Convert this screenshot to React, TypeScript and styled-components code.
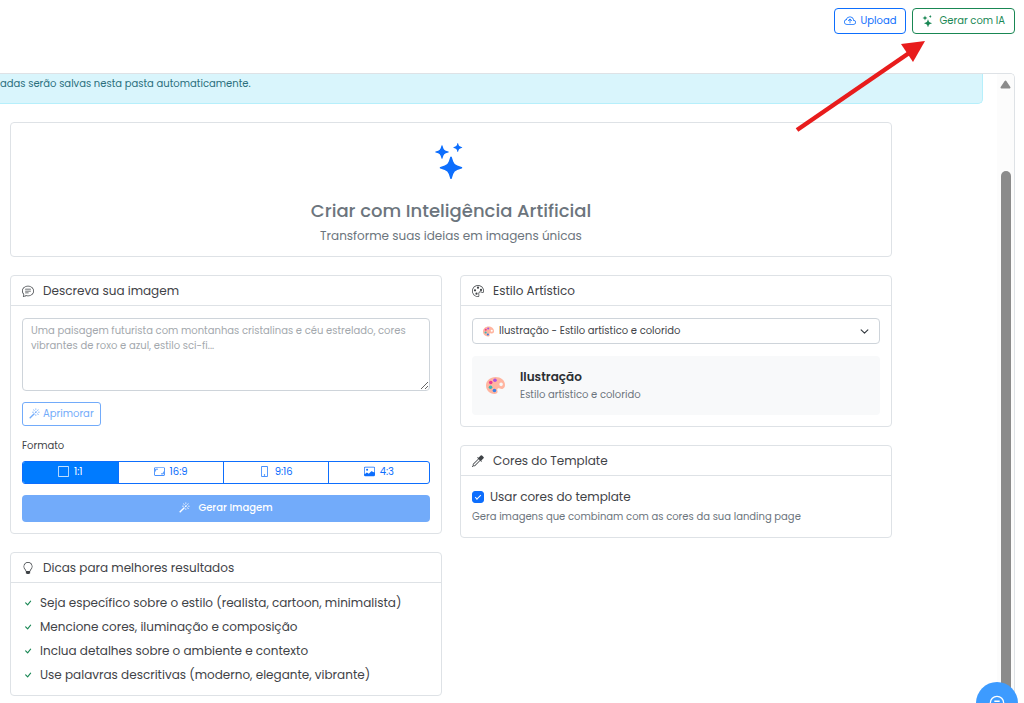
import React, { useState } from "react";
import styled, { createGlobalStyle, css } from "styled-components";
import {
  BsAspectRatio,
  BsChatText,
  BsCheck,
  BsCloudArrowUp,
  BsEyedropper,
  BsImage,
  BsLightbulb,
  BsMagic,
  BsPalette,
  BsPhone,
  BsSquare,
  BsStars,
} from "react-icons/bs";

const blue = "#0d6efd";
const green = "#198754";
const line = "#dee2e6";
const ink = "#3f4347";
const muted = "#6c757d";

const GlobalStyle = createGlobalStyle`
  *, *::before, *::after { box-sizing: border-box; }
  body {
    margin: 0;
    background: #fff;
    color: ${ink};
    font-family: Poppins, Inter, "Liberation Sans", sans-serif;
    font-size: 12px;
    line-height: 18px;
  }
  button, input, select, textarea { font: inherit; }
  h1, h2, p, ul { margin: 0; padding: 0; }
  svg { flex: none; }
`;

const Page = styled.div`
  position: relative;
  display: flex;
  flex-direction: column;
  height: 100vh;
  overflow: hidden;
`;

const Toolbar = styled.header`
  display: flex;
  justify-content: flex-end;
  gap: 6px;
  padding: 8px 9px 39px;
`;

const OutlineButton = styled.button<{ $color: string }>`
  display: flex;
  align-items: center;
  gap: 5px;
  height: 26px;
  padding: 0 9px;
  border: 1px solid ${(p) => p.$color};
  border-radius: 4px;
  background: #fff;
  color: ${(p) => p.$color};
  font-size: 10px;
  line-height: 16px;
`;

const Panel = styled.section`
  display: flex;
  flex: 1;
  min-height: 0;
  margin-right: 9px;
  border: solid ${line};
  border-width: 1px 1px 0 0;
  border-top-right-radius: 5px;
  overflow: hidden;
`;

const Content = styled.main`
  flex: 1;
  min-width: 0;
`;

const Notice = styled.p`
  height: 30px;
  margin-right: 14px;
  border: solid #b6effb;
  border-width: 0 1px 1px 0;
  border-bottom-right-radius: 5px;
  background: #d9f5fc;
  color: #2b6f7d;
  font-size: 10px;
  line-height: 20px;
  white-space: nowrap;
`;

const Creator = styled.div`
  display: grid;
  grid-template-columns: 1fr 1fr;
  align-items: start;
  gap: 18px;
  padding: 18px 105px 7px 10px;
`;

const Column = styled.div`
  display: grid;
  gap: 18px;
  min-width: 0;
`;

const Card = styled.section`
  border: 1px solid ${line};
  border-radius: 4px;
  background: #fff;
`;

const Hero = styled(Card)`
  grid-column: 1 / -1;
  display: flex;
  flex-direction: column;
  align-items: center;
  height: 135px;
  padding-top: 20px;
  color: ${muted};
`;

const HeroTitle = styled.h1`
  margin-top: 21px;
  font-size: 18px;
  font-weight: 500;
  line-height: 22px;
`;

const HeroText = styled.p`
  margin-top: 5px;
`;

const CardHeader = styled.header`
  display: flex;
  align-items: center;
  gap: 9px;
  height: 30px;
  padding: 0 11px;
  border-bottom: 1px solid ${line};
`;

const CardTitle = styled.h2`
  font-size: 12px;
  font-weight: 400;
`;

const CardBody = styled.div<{ $gap?: number }>`
  display: flex;
  flex-direction: column;
  align-items: stretch;
  gap: ${(p) => p.$gap ?? 0}px;
  padding: 12px 11px 11px;
`;

const Prompt = styled.textarea`
  display: block;
  height: 73px;
  padding: 4px 8px;
  border: 1px solid #ced4da;
  border-radius: 4px;
  color: ${ink};
  font-size: 10px;
  line-height: 15px;
  resize: vertical;
  &::placeholder { color: #a3a8ad; }
`;

const EnhanceButton = styled.button`
  display: flex;
  align-items: center;
  align-self: flex-start;
  gap: 3px;
  height: 24px;
  margin-top: 11px;
  padding: 0 6px 1px;
  border: 1px solid #72abfa;
  border-radius: 3px;
  background: #fff;
  color: #72abfa;
  font-size: 10px;
  line-height: 16px;
`;

const Formats = styled.fieldset`
  margin: 11px 0 0;
  padding: 0;
  border: 0;
  min-width: 0;
  legend { padding: 0; font-size: 10px; }
`;

const FormatGroup = styled.div`
  display: flex;
  margin-top: 6px;
  height: 23px;
  border: 1px solid ${blue};
  border-radius: 3px;
  overflow: hidden;
`;

const FormatOption = styled.label<{ $active: boolean }>`
  position: relative;
  display: flex;
  flex: 1 1 auto;
  align-items: center;
  justify-content: center;
  gap: 5px;
  padding-bottom: 2px;
  color: ${blue};
  font-size: 10px;
  & + & { border-left: 1px solid ${blue}; }
  input { position: absolute; opacity: 0; margin: 0; }
  ${(p) => p.$active && css`background: #007bff; color: #fff;`}
`;

const GenerateButton = styled.button`
  display: flex;
  align-items: center;
  justify-content: center;
  gap: 8px;
  height: 27px;
  margin-top: 11px;
  padding: 0 0 2px;
  border: 0;
  border-radius: 4px;
  background: #72abfa;
  color: #fff;
  font-size: 10px;
  font-weight: 500;
`;

const Tips = styled.ul`
  padding: 8px 11px;
  list-style: none;
`;

const Tip = styled.li`
  display: flex;
  align-items: center;
  gap: 6px;
  height: 24px;
  svg { color: ${green}; }
`;

const SelectWrap = styled.div`
  position: relative;
  display: flex;
`;

const Select = styled.select`
  appearance: none;
  width: 100%;
  height: 26px;
  padding: 0 26px;
  border: 1px solid #ced4da;
  border-radius: 4px;
  background: #fff;
  color: ${ink};
  font-size: 10px;
`;

const SelectMark = styled.span<{ $end?: boolean }>`
  position: absolute;
  top: 0;
  bottom: 0;
  ${(p) => (p.$end ? "right: 11px;" : "left: 11px;")}
  display: flex;
  align-items: center;
  pointer-events: none;
`;

const StylePreview = styled.div`
  display: flex;
  align-items: center;
  gap: 15px;
  height: 59px;
  margin-top: 12px;
  padding: 0 14px;
  border-radius: 4px;
  background: #f8f9fa;
  strong { display: block; color: #2b2f33; font-weight: 600; }
`;

const Small = styled.p`
  color: ${muted};
  font-size: 10px;
`;

const CheckLabel = styled.label`
  display: flex;
  align-items: center;
  gap: 6px;
`;

const Checkbox = styled.input`
  appearance: none;
  display: grid;
  place-items: center;
  width: 12px;
  height: 12px;
  margin: 0;
  border: 1px solid ${blue};
  border-radius: 3px;
  &:checked { background: ${blue}; }
  &:checked::after {
    content: "";
    width: 6px;
    height: 3px;
    margin-bottom: 2px;
    border: solid #fff;
    border-width: 0 0 1px 1px;
    transform: rotate(-45deg);
  }
`;

const ScrollTrack = styled.div`
  display: flex;
  flex-direction: column;
  align-items: center;
  gap: 82px;
  width: 17px;
  padding-top: 6px;
  background: #fcfcfc;
`;

const ScrollThumb = styled.div`
  flex: 1;
  width: 10px;
  border-radius: 5px 5px 0 0;
  background: #8b8b8b;
`;

const HelpButton = styled.button`
  position: fixed;
  right: 6px;
  bottom: -21px;
  display: grid;
  place-items: center;
  width: 42px;
  height: 42px;
  padding: 0;
  border: 0;
  border-radius: 50%;
  background: #3d9bff;
  color: #fff;
`;

const Pointer = styled.svg`
  position: absolute;
  top: 38px;
  right: 94px;
  pointer-events: none;
`;

function Palette({ size }: { size: number }) {
  return (
    <svg width={size} height={size} viewBox="0 0 18 18" aria-hidden="true">
      <path
        d="M9 1C4 1 0 4.500 0 9c0 4.500 3.500 8 8 8 2 0 3-.8 3-2s-1-2 0-3 3 .8 5 0c1.400-.5 2-2 2-3.500C18 4 14 1 9 1Zm5.300 5.200a1.700 1.700 0 1 1 0 3.400 1.700 1.700 0 0 1 0-3.400Z"
        fill="#ffb5a0"
        fillRule="evenodd"
      />
      <circle cx="8.500" cy="4" r="1.700" fill="#a855e0" />
      <circle cx="4.500" cy="6.200" r="1.700" fill="#ec3b8d" />
      <circle cx="4.300" cy="10.700" r="1.700" fill="#3fb5b5" />
      <circle cx="8" cy="13.800" r="1.700" fill="#3b82e6" />
    </svg>
  );
}

const formats = [
  { ratio: "1:1", icon: <BsSquare size={11} /> },
  { ratio: "16:9", icon: <BsAspectRatio size={11} /> },
  { ratio: "9:16", icon: <BsPhone size={11} /> },
  { ratio: "4:3", icon: <BsImage size={11} /> },
];

const tips = [
  "Seja específico sobre o estilo (realista, cartoon, minimalista)",
  "Mencione cores, iluminação e composição",
  "Inclua detalhes sobre o ambiente e contexto",
  "Use palavras descritivas (moderno, elegante, vibrante)",
];

export default function App() {
  const [format, setFormat] = useState("1:1");
  const [useColors, setUseColors] = useState(true);

  return (
    <Page>
      <GlobalStyle />
      <Toolbar>
        <OutlineButton type="button" $color={blue}>
          <BsCloudArrowUp size={12} />
          Upload
        </OutlineButton>
        <OutlineButton type="button" $color={green}>
          <BsStars size={12} />
          Gerar com IA
        </OutlineButton>
      </Toolbar>

      <Panel>
        <Content>
          <Notice>adas serão salvas nesta pasta automaticamente.</Notice>
          <Creator>
            <Hero>
              <BsStars size={36} color={blue} />
              <HeroTitle>Criar com Inteligência Artificial</HeroTitle>
              <HeroText>Transforme suas ideias em imagens únicas</HeroText>
            </Hero>

            <Column>
              <Card>
                <CardHeader>
                  <BsChatText size={12} />
                  <CardTitle id="prompt-title">Descreva sua imagem</CardTitle>
                </CardHeader>
                <CardBody>
                  <Prompt
                    aria-labelledby="prompt-title"
                    placeholder="Uma paisagem futurista com montanhas cristalinas e céu estrelado, cores vibrantes de roxo e azul, estilo sci-fi..."
                  />
                  <EnhanceButton type="button" disabled>
                    <BsMagic size={11} />
                    Aprimorar
                  </EnhanceButton>
                  <Formats>
                    <legend>Formato</legend>
                    <FormatGroup>
                      {formats.map(({ ratio, icon }) => (
                        <FormatOption key={ratio} $active={format === ratio}>
                          <input
                            type="radio"
                            name="format"
                            value={ratio}
                            checked={format === ratio}
                            onChange={() => setFormat(ratio)}
                          />
                          {icon}
                          {ratio}
                        </FormatOption>
                      ))}
                    </FormatGroup>
                  </Formats>
                  <GenerateButton type="button" disabled>
                    <BsMagic size={11} />
                    Gerar Imagem
                  </GenerateButton>
                </CardBody>
              </Card>

              <Card>
                <CardHeader>
                  <BsLightbulb size={12} />
                  <CardTitle>Dicas para melhores resultados</CardTitle>
                </CardHeader>
                <Tips>
                  {tips.map((tip) => (
                    <Tip key={tip}>
                      <BsCheck size={12} />
                      {tip}
                    </Tip>
                  ))}
                </Tips>
              </Card>
            </Column>

            <Column>
              <Card>
                <CardHeader>
                  <BsPalette size={12} />
                  <CardTitle id="style-title">Estilo Artístico</CardTitle>
                </CardHeader>
                <CardBody>
                  <SelectWrap>
                    <Select aria-labelledby="style-title">
                      <option>Ilustração - Estilo artístico e colorido</option>
                    </Select>
                    <SelectMark>
                      <Palette size={11} />
                    </SelectMark>
                    <SelectMark $end>
                      <svg width="9" height="9" viewBox="0 0 16 16" fill="none" aria-hidden="true">
                        <path d="m2 5 6 6 6-6" stroke="#343a40" strokeWidth="2" strokeLinecap="round" strokeLinejoin="round" />
                      </svg>
                    </SelectMark>
                  </SelectWrap>
                  <StylePreview>
                    <Palette size={19} />
                    <div>
                      <strong>Ilustração</strong>
                      <Small>Estilo artístico e colorido</Small>
                    </div>
                  </StylePreview>
                </CardBody>
              </Card>

              <Card>
                <CardHeader>
                  <BsEyedropper size={12} />
                  <CardTitle>Cores do Template</CardTitle>
                </CardHeader>
                <CardBody $gap={2}>
                  <CheckLabel>
                    <Checkbox
                      type="checkbox"
                      checked={useColors}
                      onChange={(e) => setUseColors(e.target.checked)}
                    />
                    Usar cores do template
                  </CheckLabel>
                  <Small>Gera imagens que combinam com as cores da sua landing page</Small>
                </CardBody>
              </Card>
            </Column>
          </Creator>
        </Content>

        <ScrollTrack aria-hidden="true">
          <svg width="11" height="9" viewBox="0 0 11 9">
            <path d="M5.500 1.500 9.500 7.500h-8Z" fill="#8b8b8b" stroke="#8b8b8b" strokeWidth="2" strokeLinejoin="round" />
          </svg>
          <ScrollThumb />
        </ScrollTrack>
      </Panel>

      <HelpButton type="button" aria-label="Ajuda">
        <svg width="16" height="16" viewBox="0 0 18 18" fill="none" stroke="#fff" strokeWidth="1.500" aria-hidden="true">
          <circle cx="9" cy="9" r="7.500" />
          <path d="M6 7h6M6 10h6" />
        </svg>
      </HelpButton>

      <Pointer width="136" height="96" viewBox="0 0 136 96" aria-hidden="true">
        <path d="M3 92 118 13" stroke="#e81c1c" strokeWidth="4.500" />
        <path d="M131 3 107 6l12 18Z" fill="#e81c1c" />
      </Pointer>
    </Page>
  );
}
